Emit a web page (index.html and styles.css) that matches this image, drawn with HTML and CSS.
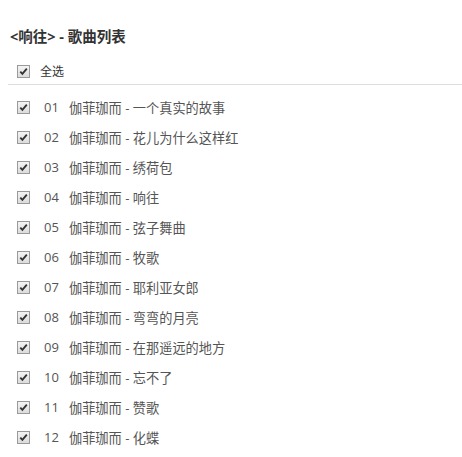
FILE: index.html
```html
<!DOCTYPE html>
<html>
<head>
<meta charset="utf-8">
<link rel="stylesheet" href="styles.css">
</head>
<body>
<div class="page">
  <h3 class="title">&lt;响往&gt; - 歌曲列表</h3>
  <div class="all-row">
    <span class="cb"><svg viewBox="0 0 12 12" width="12" height="12"><path d="M2.5 6.2 L4.8 8.6 L9.6 2.8" fill="none" stroke="#333" stroke-width="2"/></svg></span>
    <span class="all-label">全选</span>
  </div>
  <ul class="songs">
    <li class="song"><span class="cb"><svg viewBox="0 0 12 12" width="12" height="12"><path d="M2.5 6.2 L4.8 8.6 L9.6 2.8" fill="none" stroke="#333" stroke-width="2"/></svg></span><span class="num">01</span><span class="name">伽菲珈而 - 一个真实的故事</span></li>
    <li class="song"><span class="cb"><svg viewBox="0 0 12 12" width="12" height="12"><path d="M2.5 6.2 L4.8 8.6 L9.6 2.8" fill="none" stroke="#333" stroke-width="2"/></svg></span><span class="num">02</span><span class="name">伽菲珈而 - 花儿为什么这样红</span></li>
    <li class="song"><span class="cb"><svg viewBox="0 0 12 12" width="12" height="12"><path d="M2.5 6.2 L4.8 8.6 L9.6 2.8" fill="none" stroke="#333" stroke-width="2"/></svg></span><span class="num">03</span><span class="name">伽菲珈而 - 绣荷包</span></li>
    <li class="song"><span class="cb"><svg viewBox="0 0 12 12" width="12" height="12"><path d="M2.5 6.2 L4.8 8.6 L9.6 2.8" fill="none" stroke="#333" stroke-width="2"/></svg></span><span class="num">04</span><span class="name">伽菲珈而 - 响往</span></li>
    <li class="song"><span class="cb"><svg viewBox="0 0 12 12" width="12" height="12"><path d="M2.5 6.2 L4.8 8.6 L9.6 2.8" fill="none" stroke="#333" stroke-width="2"/></svg></span><span class="num">05</span><span class="name">伽菲珈而 - 弦子舞曲</span></li>
    <li class="song"><span class="cb"><svg viewBox="0 0 12 12" width="12" height="12"><path d="M2.5 6.2 L4.8 8.6 L9.6 2.8" fill="none" stroke="#333" stroke-width="2"/></svg></span><span class="num">06</span><span class="name">伽菲珈而 - 牧歌</span></li>
    <li class="song"><span class="cb"><svg viewBox="0 0 12 12" width="12" height="12"><path d="M2.5 6.2 L4.8 8.6 L9.6 2.8" fill="none" stroke="#333" stroke-width="2"/></svg></span><span class="num">07</span><span class="name">伽菲珈而 - 耶利亚女郎</span></li>
    <li class="song"><span class="cb"><svg viewBox="0 0 12 12" width="12" height="12"><path d="M2.5 6.2 L4.8 8.6 L9.6 2.8" fill="none" stroke="#333" stroke-width="2"/></svg></span><span class="num">08</span><span class="name">伽菲珈而 - 弯弯的月亮</span></li>
    <li class="song"><span class="cb"><svg viewBox="0 0 12 12" width="12" height="12"><path d="M2.5 6.2 L4.8 8.6 L9.6 2.8" fill="none" stroke="#333" stroke-width="2"/></svg></span><span class="num">09</span><span class="name">伽菲珈而 - 在那遥远的地方</span></li>
    <li class="song"><span class="cb"><svg viewBox="0 0 12 12" width="12" height="12"><path d="M2.5 6.2 L4.8 8.6 L9.6 2.8" fill="none" stroke="#333" stroke-width="2"/></svg></span><span class="num">10</span><span class="name">伽菲珈而 - 忘不了</span></li>
    <li class="song"><span class="cb"><svg viewBox="0 0 12 12" width="12" height="12"><path d="M2.5 6.2 L4.8 8.6 L9.6 2.8" fill="none" stroke="#333" stroke-width="2"/></svg></span><span class="num">11</span><span class="name">伽菲珈而 - 赞歌</span></li>
    <li class="song"><span class="cb"><svg viewBox="0 0 12 12" width="12" height="12"><path d="M2.5 6.2 L4.8 8.6 L9.6 2.8" fill="none" stroke="#333" stroke-width="2"/></svg></span><span class="num">12</span><span class="name">伽菲珈而 - 化蝶</span></li>
  </ul>
</div>
</body>
</html>
```
FILE: styles.css
```css
html, body {
  margin: 0;
  padding: 0;
  background: #fff;
}
body {
  font-family: "Open Sans", "Noto Sans CJK SC", sans-serif;
  font-size: 13px;
  color: #555;
}
.page {
  padding: 27px 0 0 8px;
}
.title {
  margin: 0 0 0 2px;
  font-size: 14.5px;
  font-weight: bold;
  color: #333;
  line-height: 20px;
}
.all-row {
  display: flex;
  align-items: center;
  height: 22px;
  margin-top: 13px;
  padding-left: 9px;
  padding-bottom: 2px;
  border-bottom: 1px solid #ddd;
}
.all-label {
  margin-left: 10px;
  color: #333;
  font-size: 12px;
}
.cb {
  display: inline-flex;
  width: 11px;
  height: 11px;
  border: 1px solid #9a9a9a;
  background: linear-gradient(#f4f4f4, #dcdcdc);
  box-sizing: content-box;
  flex: none;
}
.cb svg {
  width: 11px;
  height: 11px;
}
.songs {
  list-style: none;
  margin: 7px 0 0 0;
  padding: 0 0 0 9px;
}
.song {
  display: flex;
  align-items: center;
  height: 30px;
}
.num {
  margin-left: 14px;
  width: 25px;
}
.name {
  color: #555;
  font-size: 13.2px;
}
```
